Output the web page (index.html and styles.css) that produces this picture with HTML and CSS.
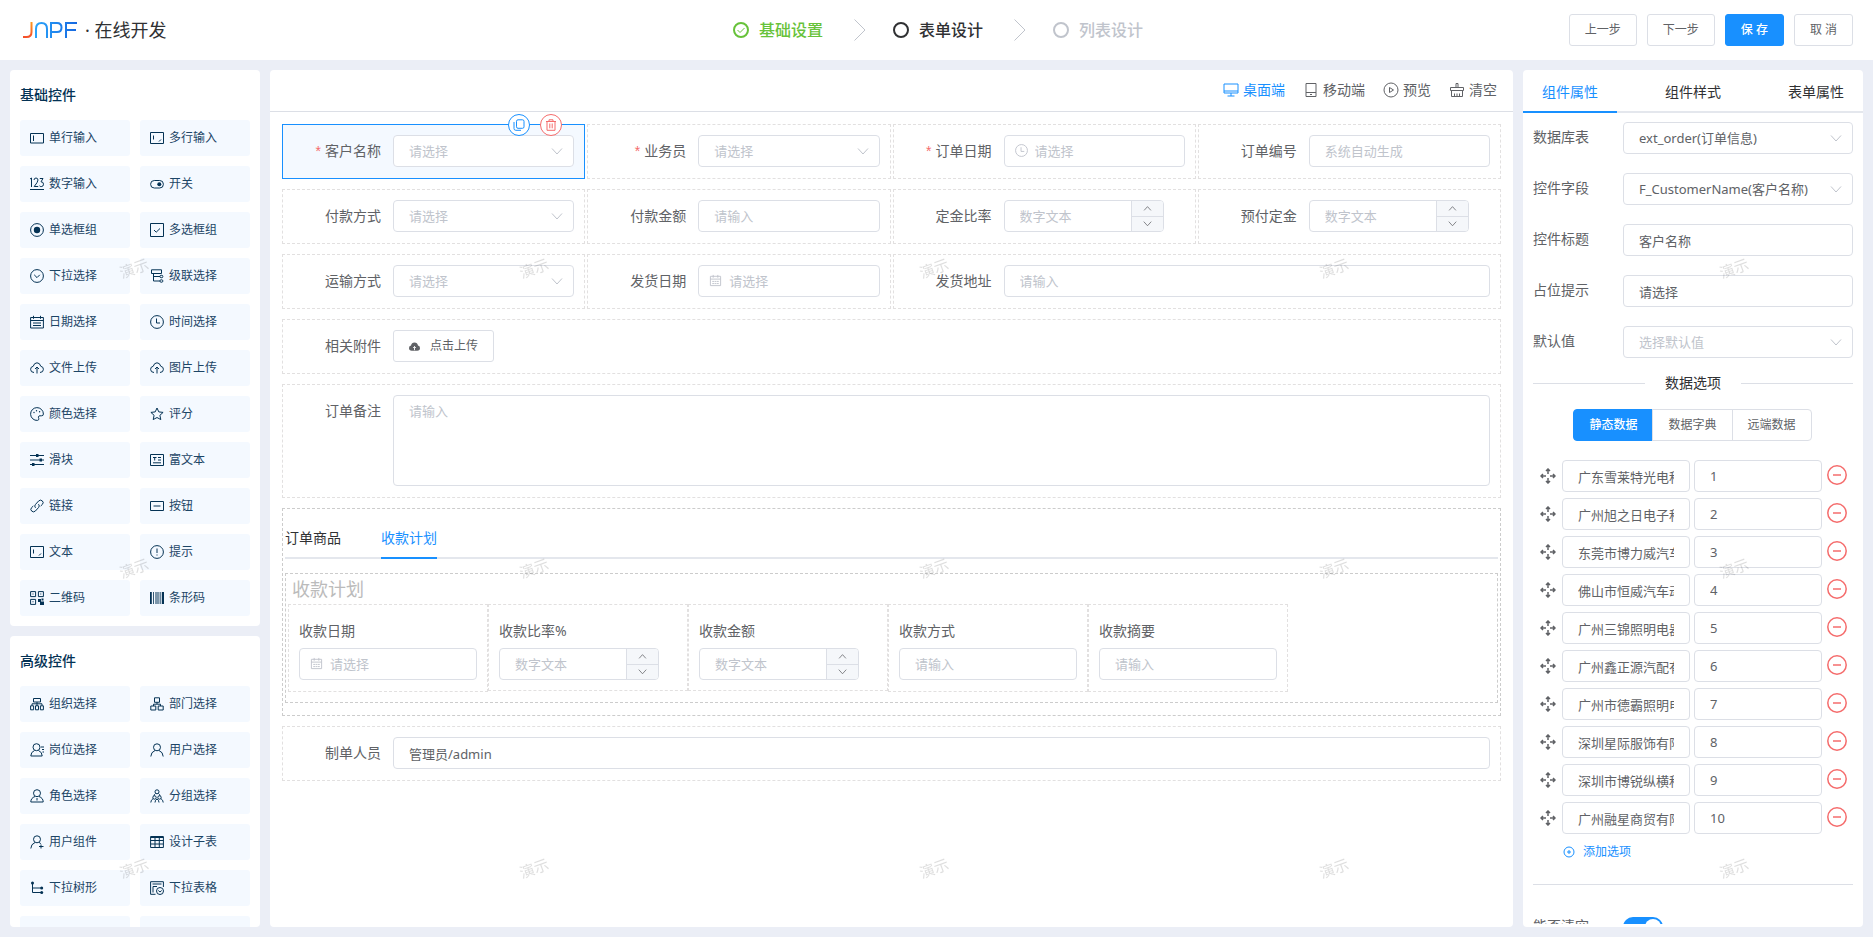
FILE: index.html
```html
<!DOCTYPE html>
<html lang="zh-CN">
<head>
<meta charset="utf-8">
<title>在线开发</title>
<link rel="stylesheet" href="styles.css">
</head>
<body>
<svg class="defs" aria-hidden="true">
  <defs>
    <symbol id="i-input" viewBox="0 0 14 14"><path d="M.5 2.500h13v9.500H.5zM3.500 4.500v5.500"/></symbol>
    <symbol id="i-textarea" viewBox="0 0 14 14"><path d="M.5 1.500h13v11H.5zM3.500 4.500v4M9 10.500l2-2"/></symbol>
    <symbol id="i-number" viewBox="0 0 14 14"><path d="M0 12.500h14M0 2l1.500-1v9M4 3q.2-2 2-2t2 2q0 2-3.800 6.500h4M9.800 1.500h3.200l-2 3.300q2.500 0 2.500 2.400T11.200 9.600q-1.200 0-1.700-.8"/></symbol>
    <symbol id="i-switch" viewBox="0 0 14 14"><rect x=".6" y="3.500" width="12.800" height="7.500" rx="3.700"/><circle class="solid" cx="9.300" cy="7.200" r="2"/></symbol>
    <symbol id="i-radio" viewBox="0 0 14 14"><circle cx="7" cy="7" r="6.400"/><circle class="solid" cx="7" cy="7" r="3.200"/></symbol>
    <symbol id="i-check" viewBox="0 0 14 14"><path d="M.5.5h13v13H.5zM4 7l2.200 2.200L10 5.500"/></symbol>
    <symbol id="i-select" viewBox="0 0 14 14"><circle cx="7" cy="7" r="6.400"/><path d="M4.200 5.800L7 8.600l2.800-2.800"/></symbol>
    <symbol id="i-cascade" viewBox="0 0 14 14"><path d="M1.500.8h10v3.700h-10zM3.500 4.500v7.500H10M3.500 7.500H10"/><rect x="10" y="6.300" width="2.800" height="2.400" rx="1"/><rect x="10" y="10.800" width="2.800" height="2.400" rx="1"/></symbol>
    <symbol id="i-date" viewBox="0 0 14 14"><path d="M.6 2.500h12.800v10.500H.6zM.6 5.500h12.800M3.500.8v3M10.500.8v3M3 8h8M3 10.500h8"/></symbol>
    <symbol id="i-time" viewBox="0 0 14 14"><circle cx="7" cy="7" r="6.400"/><path d="M6.500 3.500v4.500H10"/></symbol>
    <symbol id="i-upload" viewBox="0 0 14 14"><path d="M4 11.500Q.6 11.400.6 8.300q0-2.600 2.600-3Q4.200 1.800 7 1.800t3.800 3.500q2.600.4 2.600 3 0 3.100-3.400 3.200M7 12.500V6M5 8l2-2 2 2"/></symbol>
    <symbol id="i-color" viewBox="0 0 14 14"><path d="M7.500 13.400A6.400 6.400 0 1 1 13.400 7q0 2-2 1.800-3-.5-3 1.200 0 .8.400 1.600.3 1.500-1.300 1.800z"/><circle class="solid" cx="4" cy="5.500" r=".7"/><circle class="solid" cx="6.500" cy="3.700" r=".7"/><circle class="solid" cx="9.600" cy="4.700" r=".7"/></symbol>
    <symbol id="i-star" viewBox="0 0 14 14"><path d="M7 1l1.800 3.900 4.300.5-3.200 2.900.9 4.300L7 10.500l-3.800 2.100.9-4.300L.9 5.400l4.300-.5z"/></symbol>
    <symbol id="i-slider" viewBox="0 0 14 14"><path d="M0 2.500h14M0 7h14M0 11.500h14"/><path class="solid" d="M6 1h2.500v3H6zM9.500 5.500H12v3H9.500zM2 10h2.500v3H2z"/></symbol>
    <symbol id="i-rich" viewBox="0 0 14 14"><path d="M.5 1.500h13v11H.5zM3 4.500h3.500M4.700 4.500v3M8 4.500h3M8 7h3M3 9.800h8"/></symbol>
    <symbol id="i-link" viewBox="0 0 14 14"><path d="M5.500 8.800q-1.600-1.800 0-3.400l3.200-3.500q1.800-1.600 3.600 0t.1 3.500L10.700 7M8.500 5.200q1.600 1.800 0 3.400l-3.200 3.500q-1.800 1.600-3.600 0t-.1-3.500L3.300 7"/></symbol>
    <symbol id="i-button" viewBox="0 0 14 14"><path d="M.5 2.500h13v9H.5zM3.500 7h7"/></symbol>
    <symbol id="i-tip" viewBox="0 0 14 14"><circle cx="7" cy="7" r="6.400"/><path d="M7 3.500v4.500M7 9.500v1"/></symbol>
    <symbol id="i-qr" viewBox="0 0 14 14"><path d="M.6.6h5v5h-5zM8.400.6h5v5h-5zM.6 8.400h5v5h-5z"/><path class="solid" d="M2.500 2.500h1v1h-1zM10.300 2.500h1v1h-1zM2.500 10.300h1v1h-1zM8 8h3v3H8zM11.500 7.500h2v2h-2zM10 10.500h4V14h-4z"/></symbol>
    <symbol id="i-bar" viewBox="0 0 14 14"><path class="solid" d="M0 1h1.800v12H0zM3 1h.8v12H3zM5 1h.5v12H5zM6.500 1h1v12h-1zM8.500 1h.8v12h-.8zM10 1h.6v12H10zM11.800 1H14v12h-2.200z"/></symbol>
    <symbol id="i-org" viewBox="0 0 14 14"><path d="M3.500 1.500h7v3.500h-7zM7 5v4M2 8.500V6.800h10v1.700M.6 8.800h3v4h-3zM5.500 8.800h3v4h-3zM10.400 8.800h3v4h-3z"/></symbol>
    <symbol id="i-dept" viewBox="0 0 14 14"><path d="M4.500.8h5v4.500h-5zM7 5.300V7M3.500 9V7.200h7V9M.8 9h5v4h-5zM8.200 9h5v4h-5z"/></symbol>
    <symbol id="i-post" viewBox="0 0 14 14"><circle cx="6.500" cy="4.200" r="3.500"/><path d="M4.500 7.500Q.8 9 .8 13h11.400q0-4-3.700-5.500M11 4h3M12 6.500h2M12.500 9H14"/></symbol>
    <symbol id="i-user" viewBox="0 0 14 14"><circle cx="7" cy="4.300" r="3.500"/><path d="M.8 13.500Q1 9 5 7.500M13.200 13.500Q13 9 9 7.500"/></symbol>
    <symbol id="i-role" viewBox="0 0 14 14"><circle cx="7" cy="4.200" r="3.500"/><path d="M5 7.500Q.8 9 .8 13h12.400q0-4-4.200-5.500M7 9v2.500"/></symbol>
    <symbol id="i-group" viewBox="0 0 14 14"><circle cx="7" cy="2.800" r="2"/><circle cx="4.500" cy="8.500" r="1.700"/><circle cx="9.500" cy="8.500" r="1.700"/><path d="M5.500 4.500Q4 5.500 4 7M8.500 4.500Q10 5.500 10 7M3.200 9.500Q.8 11 .8 13.500M10.800 9.500q2.400 1.500 2.400 4M5 13.500q0-2.500 2-3.500 2 1 2 3.500"/></symbol>
    <symbol id="i-useradd" viewBox="0 0 14 14"><circle cx="7" cy="4.300" r="3.500"/><path d="M.8 13.500Q1 9 5 7.500M9 7.500q1 .3 1.800 1.200M11 9.500v4M9 11.500h4.500"/></symbol>
    <symbol id="i-table" viewBox="0 0 14 14"><path d="M.6 1.500h12.800v11H.6zM.6 2.500h12.800M.6 5.500h12.800M.6 9h12.800M5 1.500v11M9.300 1.500v11"/></symbol>
    <symbol id="i-tree" viewBox="0 0 14 14"><path d="M2.500 2v9.500H12M2.500 7H12"/><circle class="solid" cx="2.500" cy="2" r="1.500"/><circle class="solid" cx="11.700" cy="7" r="1.500"/><circle class="solid" cx="11.700" cy="11.500" r="1.500"/></symbol>
    <symbol id="i-seltable" viewBox="0 0 14 14"><path d="M5.500 13.300H.6V.7h12.800V6M2.500 3h9M3 5.500h4M3 5.500v6"/><circle cx="10" cy="10" r="3.500"/><path d="M8.300 9.500L10 11l1.700-1.500"/></symbol>
    <symbol id="i-down" viewBox="0 0 12 12"><path d="M1 3.500l5 5.500 5-5.500"/></symbol>
    <symbol id="i-up" viewBox="0 0 12 12"><path d="M1.500 8.500L6 3.500l4.500 5"/></symbol>
    <symbol id="i-cal" viewBox="0 0 14 14"><path d="M1.500 2.500h11v10h-11zM1.500 5.500h11M4.500 1v3M9.500 1v3M3.500 8h2M6 8h2M8.500 8h2M3.500 10.300h2M6 10.300h2M8.500 10.300h2"/></symbol>
    <symbol id="i-move" viewBox="0 0 16 16"><path d="M8 1v5M8 10v5M1 8h5M10 8h5M6 3l2-2 2 2M6 13l2 2 2-2M3 6L1 8l2 2M13 6l2 2-2 2"/></symbol>
    <symbol id="i-minus" viewBox="0 0 20 20"><circle cx="10" cy="10" r="9.200"/><path d="M6 10h8"/></symbol>
  </defs>
</svg>

<header class="topbar">
  <div class="brand">
    <svg class="logo" viewBox="0 0 54 16" role="img" aria-label="JNPF">
      <defs>
        <linearGradient id="gOrange" x1="0" y1="0" x2="0" y2="1"><stop offset="0" stop-color="#ff9a1f"/><stop offset="1" stop-color="#f4502a"/></linearGradient>
        <linearGradient id="gBlue" gradientUnits="userSpaceOnUse" x1="12" y1="0" x2="54" y2="0"><stop offset="0" stop-color="#2aa5fb"/><stop offset="1" stop-color="#1668e0"/></linearGradient>
      </defs>
      <path stroke="url(#gOrange)" d="M8.500 0v10q0 5-5 5H0"/>
      <path stroke="url(#gBlue)" d="M13 16V7q0-6 5.500-6T24 7v9M28 16V1h6q4.500 0 4.500 4.500T34 10h-6M54 1H43v15M43 8h10"/>
    </svg>
    <span class="brand-text">· 在线开发</span>
  </div>
  <ol class="steps">
    <li class="step done"><svg viewBox="0 0 16 16"><circle cx="8" cy="8" r="7"/><path class="fine" d="M4.500 8l2.500 2.500L11.500 6"/></svg>基础设置</li>
    <li class="arrow" aria-hidden="true"><svg viewBox="0 0 12 22"><path d="M.5.5L11 11 .5 21.500"/></svg></li>
    <li class="step current"><svg viewBox="0 0 16 16"><circle cx="8" cy="8" r="7"/></svg>表单设计</li>
    <li class="arrow" aria-hidden="true"><svg viewBox="0 0 12 22"><path d="M.5.5L11 11 .5 21.500"/></svg></li>
    <li class="step"><svg viewBox="0 0 16 16"><circle cx="8" cy="8" r="7"/></svg>列表设计</li>
  </ol>
  <div class="actions">
    <button class="btn">上一步</button>
    <button class="btn">下一步</button>
    <button class="btn primary">保 存</button>
    <button class="btn">取 消</button>
  </div>
</header>

<main class="workspace">
  <aside class="left">
    <section class="panel palette">
      <h2>基础控件</h2>
      <div class="tiles">
        <button class="tile"><svg class="ico"><use href="#i-input"/></svg>单行输入</button>
        <button class="tile"><svg class="ico"><use href="#i-textarea"/></svg>多行输入</button>
        <button class="tile"><svg class="ico"><use href="#i-number"/></svg>数字输入</button>
        <button class="tile"><svg class="ico"><use href="#i-switch"/></svg>开关</button>
        <button class="tile"><svg class="ico"><use href="#i-radio"/></svg>单选框组</button>
        <button class="tile"><svg class="ico"><use href="#i-check"/></svg>多选框组</button>
        <button class="tile"><svg class="ico"><use href="#i-select"/></svg>下拉选择</button>
        <button class="tile"><svg class="ico"><use href="#i-cascade"/></svg>级联选择</button>
        <button class="tile"><svg class="ico"><use href="#i-date"/></svg>日期选择</button>
        <button class="tile"><svg class="ico"><use href="#i-time"/></svg>时间选择</button>
        <button class="tile"><svg class="ico"><use href="#i-upload"/></svg>文件上传</button>
        <button class="tile"><svg class="ico"><use href="#i-upload"/></svg>图片上传</button>
        <button class="tile"><svg class="ico"><use href="#i-color"/></svg>颜色选择</button>
        <button class="tile"><svg class="ico"><use href="#i-star"/></svg>评分</button>
        <button class="tile"><svg class="ico"><use href="#i-slider"/></svg>滑块</button>
        <button class="tile"><svg class="ico"><use href="#i-rich"/></svg>富文本</button>
        <button class="tile"><svg class="ico"><use href="#i-link"/></svg>链接</button>
        <button class="tile"><svg class="ico"><use href="#i-button"/></svg>按钮</button>
        <button class="tile"><svg class="ico"><use href="#i-textarea"/></svg>文本</button>
        <button class="tile"><svg class="ico"><use href="#i-tip"/></svg>提示</button>
        <button class="tile"><svg class="ico"><use href="#i-qr"/></svg>二维码</button>
        <button class="tile"><svg class="ico"><use href="#i-bar"/></svg>条形码</button>
      </div>
    </section>
    <section class="panel palette grow">
      <h2>高级控件</h2>
      <div class="tiles">
        <button class="tile"><svg class="ico"><use href="#i-org"/></svg>组织选择</button>
        <button class="tile"><svg class="ico"><use href="#i-dept"/></svg>部门选择</button>
        <button class="tile"><svg class="ico"><use href="#i-post"/></svg>岗位选择</button>
        <button class="tile"><svg class="ico"><use href="#i-user"/></svg>用户选择</button>
        <button class="tile"><svg class="ico"><use href="#i-role"/></svg>角色选择</button>
        <button class="tile"><svg class="ico"><use href="#i-group"/></svg>分组选择</button>
        <button class="tile"><svg class="ico"><use href="#i-useradd"/></svg>用户组件</button>
        <button class="tile"><svg class="ico"><use href="#i-table"/></svg>设计子表</button>
        <button class="tile"><svg class="ico"><use href="#i-tree"/></svg>下拉树形</button>
        <button class="tile"><svg class="ico"><use href="#i-seltable"/></svg>下拉表格</button>
        <button class="tile" aria-label="更多"></button>
        <button class="tile" aria-label="更多"></button>
      </div>
    </section>
  </aside>

  <section class="panel canvas">
    <div class="toolbar">
      <button class="tool active"><svg viewBox="0 0 16 16"><path d="M1 2h14v9H1zM1 9h14M8 11v3M4.500 14h7"/></svg>桌面端</button>
      <button class="tool"><svg viewBox="0 0 16 16"><path d="M3 1.500h10v13H3zM3 10.500h10M7 12.500h2"/></svg>移动端</button>
      <button class="tool"><svg viewBox="0 0 16 16"><circle cx="8" cy="8" r="7"/><path d="M6.500 5.500v5L10.500 8z"/></svg>预览</button>
      <button class="tool"><svg viewBox="0 0 16 16"><path d="M7 1.500h2v4H7zM1.500 5.500h13v3h-13zM2.500 8.500v6h11v-6M5.500 11.500v3M8 11.500v3M10.500 11.500v3"/></svg>清空</button>
    </div>

    <form class="form">
      <div class="cell selected">
        <label class="lbl req" for="f1">客户名称</label>
        <div class="field"><select id="f1" class="control empty"><option>请选择</option></select><svg class="caret"><use href="#i-down"/></svg></div>
        <div class="badges">
          <button type="button" class="badge copy" aria-label="复制"><svg viewBox="0 0 12 12"><rect x="3.500" y=".8" width="7.500" height="8.500" rx="1.500"/><path d="M1 3v6.500q0 1.800 1.800 1.800H8"/></svg></button>
          <button type="button" class="badge del" aria-label="删除"><svg viewBox="0 0 12 12"><path d="M1 2.500h10M4 2.500V.8h4v1.700M2 2.500v8.800h8V2.500M4.800 4.500v4.800M7.200 4.500v4.800"/></svg></button>
        </div>
      </div>
      <div class="cell">
        <label class="lbl req" for="f2">业务员</label>
        <div class="field"><select id="f2" class="control empty"><option>请选择</option></select><svg class="caret"><use href="#i-down"/></svg></div>
      </div>
      <div class="cell">
        <label class="lbl req" for="f3">订单日期</label>
        <div class="field"><svg class="prefix"><use href="#i-time"/></svg><input id="f3" class="control prefixed" placeholder="请选择"></div>
      </div>
      <div class="cell">
        <label class="lbl" for="f4">订单编号</label>
        <div class="field"><input id="f4" class="control" placeholder="系统自动生成"></div>
      </div>

      <div class="cell">
        <label class="lbl" for="f5">付款方式</label>
        <div class="field"><select id="f5" class="control empty"><option>请选择</option></select><svg class="caret"><use href="#i-down"/></svg></div>
      </div>
      <div class="cell">
        <label class="lbl" for="f6">付款金额</label>
        <div class="field"><input id="f6" class="control" placeholder="请输入"></div>
      </div>
      <div class="cell">
        <label class="lbl" for="f7">定金比率</label>
        <div class="number"><input id="f7" placeholder="数字文本"><span class="spin"><button type="button" aria-label="增加"><svg><use href="#i-up"/></svg></button><button type="button" aria-label="减少"><svg><use href="#i-down"/></svg></button></span></div>
      </div>
      <div class="cell">
        <label class="lbl" for="f8">预付定金</label>
        <div class="number"><input id="f8" placeholder="数字文本"><span class="spin"><button type="button" aria-label="增加"><svg><use href="#i-up"/></svg></button><button type="button" aria-label="减少"><svg><use href="#i-down"/></svg></button></span></div>
      </div>

      <div class="cell">
        <label class="lbl" for="f9">运输方式</label>
        <div class="field"><select id="f9" class="control empty"><option>请选择</option></select><svg class="caret"><use href="#i-down"/></svg></div>
      </div>
      <div class="cell">
        <label class="lbl" for="f10">发货日期</label>
        <div class="field"><svg class="prefix"><use href="#i-cal"/></svg><input id="f10" class="control prefixed" placeholder="请选择"></div>
      </div>
      <div class="cell half">
        <label class="lbl" for="f11">发货地址</label>
        <div class="field"><input id="f11" class="control" placeholder="请输入"></div>
      </div>

      <div class="cell full">
        <span class="lbl">相关附件</span>
        <button type="button" class="btn upload"><svg viewBox="0 0 12 12"><path fill="#606266" d="M3 10.500Q0 10.400 0 7.600 0 5.400 2.200 5 2.800 1.500 6 1.500T9.800 5Q12 5.400 12 7.600q0 2.800-3 2.900z"/><path stroke="#fff" d="M6 10V6M4.500 7.500L6 6l1.500 1.500"/></svg>点击上传</button>
      </div>

      <div class="cell full">
        <label class="lbl" for="f12">订单备注</label>
        <div class="field"><textarea id="f12" class="control area" placeholder="请输入"></textarea></div>
      </div>

      <div class="tabbox full">
        <div class="tabs" role="tablist">
          <button type="button" class="tab" role="tab">订单商品</button>
          <button type="button" class="tab on" role="tab">收款计划</button>
        </div>
        <div class="subtable">
          <h3>收款计划</h3>
          <div class="columns">
            <div class="col">
              <label for="s1">收款日期</label>
              <div class="field"><svg class="prefix"><use href="#i-cal"/></svg><input id="s1" class="control prefixed" placeholder="请选择"></div>
            </div>
            <div class="col short">
              <label for="s2">收款比率%</label>
              <div class="number"><input id="s2" placeholder="数字文本"><span class="spin"><button type="button" aria-label="增加"><svg><use href="#i-up"/></svg></button><button type="button" aria-label="减少"><svg><use href="#i-down"/></svg></button></span></div>
            </div>
            <div class="col short">
              <label for="s3">收款金额</label>
              <div class="number"><input id="s3" placeholder="数字文本"><span class="spin"><button type="button" aria-label="增加"><svg><use href="#i-up"/></svg></button><button type="button" aria-label="减少"><svg><use href="#i-down"/></svg></button></span></div>
            </div>
            <div class="col">
              <label for="s4">收款方式</label>
              <div class="field"><input id="s4" class="control" placeholder="请输入"></div>
            </div>
            <div class="col">
              <label for="s5">收款摘要</label>
              <div class="field"><input id="s5" class="control" placeholder="请输入"></div>
            </div>
          </div>
        </div>
      </div>

      <div class="cell full">
        <label class="lbl" for="f13">制单人员</label>
        <div class="field"><input id="f13" class="control" value="管理员/admin"></div>
      </div>
    </form>
  </section>

  <aside class="panel props">
    <div class="ptabs" role="tablist">
      <button class="ptab on" role="tab">组件属性</button>
      <button class="ptab" role="tab">组件样式</button>
      <button class="ptab" role="tab">表单属性</button>
    </div>
    <div class="pbody">
      <div class="prow"><label for="p1">数据库表</label><div class="field"><select id="p1" class="control"><option>ext_order(订单信息)</option></select><svg class="caret"><use href="#i-down"/></svg></div></div>
      <div class="prow"><label for="p2">控件字段</label><div class="field"><select id="p2" class="control"><option>F_CustomerName(客户名称)</option></select><svg class="caret"><use href="#i-down"/></svg></div></div>
      <div class="prow"><label for="p3">控件标题</label><div class="field"><input id="p3" class="control" value="客户名称"></div></div>
      <div class="prow"><label for="p4">占位提示</label><div class="field"><input id="p4" class="control" value="请选择"></div></div>
      <div class="prow"><label for="p5">默认值</label><div class="field"><select id="p5" class="control empty"><option>选择默认值</option></select><svg class="caret"><use href="#i-down"/></svg></div></div>

      <div class="divider"><span>数据选项</span></div>

      <div class="group">
        <button class="on">静态数据</button><button>数据字典</button><button>远端数据</button>
      </div>

      <div class="options">
        <div class="opt"><svg class="move"><use href="#i-move"/></svg><input class="control" aria-label="选项名" value="广东雪莱特光电科技"><input class="control" aria-label="选项值" value="1"><button aria-label="删除"><svg><use href="#i-minus"/></svg></button></div>
        <div class="opt"><svg class="move"><use href="#i-move"/></svg><input class="control" aria-label="选项名" value="广州旭之日电子科技"><input class="control" aria-label="选项值" value="2"><button aria-label="删除"><svg><use href="#i-minus"/></svg></button></div>
        <div class="opt"><svg class="move"><use href="#i-move"/></svg><input class="control" aria-label="选项名" value="东莞市博力威汽车"><input class="control" aria-label="选项值" value="3"><button aria-label="删除"><svg><use href="#i-minus"/></svg></button></div>
        <div class="opt"><svg class="move"><use href="#i-move"/></svg><input class="control" aria-label="选项名" value="佛山市恒威汽车动力"><input class="control" aria-label="选项值" value="4"><button aria-label="删除"><svg><use href="#i-minus"/></svg></button></div>
        <div class="opt"><svg class="move"><use href="#i-move"/></svg><input class="control" aria-label="选项名" value="广州三锦照明电器"><input class="control" aria-label="选项值" value="5"><button aria-label="删除"><svg><use href="#i-minus"/></svg></button></div>
        <div class="opt"><svg class="move"><use href="#i-move"/></svg><input class="control" aria-label="选项名" value="广州鑫正源汽配有限"><input class="control" aria-label="选项值" value="6"><button aria-label="删除"><svg><use href="#i-minus"/></svg></button></div>
        <div class="opt"><svg class="move"><use href="#i-move"/></svg><input class="control" aria-label="选项名" value="广州市德霸照明电器"><input class="control" aria-label="选项值" value="7"><button aria-label="删除"><svg><use href="#i-minus"/></svg></button></div>
        <div class="opt"><svg class="move"><use href="#i-move"/></svg><input class="control" aria-label="选项名" value="深圳星际服饰有限"><input class="control" aria-label="选项值" value="8"><button aria-label="删除"><svg><use href="#i-minus"/></svg></button></div>
        <div class="opt"><svg class="move"><use href="#i-move"/></svg><input class="control" aria-label="选项名" value="深圳市博锐纵横科技"><input class="control" aria-label="选项值" value="9"><button aria-label="删除"><svg><use href="#i-minus"/></svg></button></div>
        <div class="opt"><svg class="move"><use href="#i-move"/></svg><input class="control" aria-label="选项名" value="广州融星商贸有限"><input class="control" aria-label="选项值" value="10"><button aria-label="删除"><svg><use href="#i-minus"/></svg></button></div>
      </div>
      <button class="add"><svg viewBox="0 0 12 12"><circle cx="6" cy="6" r="5"/><path d="M6 4v4M4 6h4"/></svg>添加选项</button>
      <hr class="rule">
      <div class="prow"><label for="p6">能否清空</label><input type="checkbox" id="p6" class="switch" checked></div>
    </div>
  </aside>
</main>

<svg class="watermark" aria-hidden="true">
  <defs><pattern id="wm" width="400" height="300" patternUnits="userSpaceOnUse"><text x="134" y="274" text-anchor="middle" transform="rotate(-20 134 268)">演示</text></pattern></defs>
  <rect width="100%" height="100%" fill="url(#wm)"/>
</svg>
</body>
</html>
```
FILE: styles.css
```css
* { box-sizing: border-box; }

body {
  margin: 0;
  height: 100vh;
  display: flex;
  flex-direction: column;
  overflow: hidden;
  background: #ebeef6;
  color: #606266;
  font: 14px/20px "Noto Sans", "Noto Sans CJK SC", sans-serif;
}

button, input, select, textarea { font: inherit; color: inherit; margin: 0; }
button { background: none; border: 0; padding: 0; cursor: pointer; }
h2, h3, ol { margin: 0; padding: 0; font-weight: 400; list-style: none; }
svg { fill: none; stroke: currentColor; flex: none; display: block; }
.defs { position: absolute; width: 0; height: 0; }
.solid { fill: currentColor; stroke: none; }

/* header */
.topbar {
  flex: none;
  height: 60px;
  padding: 0 20px;
  display: flex;
  align-items: center;
  background: #fff;
}
.brand { flex: 1; display: flex; align-items: center; gap: 8px; padding-left: 3px; }
.logo { width: 54px; height: 16px; stroke-width: 2; }
.brand-text { font-size: 18px; color: #303133; line-height: 28px; }
.steps { display: flex; align-items: center; font-size: 16px; }
.step { display: flex; align-items: center; gap: 10px; color: #c0c4cc; font-weight: 500; }
.step svg { width: 16px; height: 16px; stroke-width: 2; }
.step .fine { stroke-width: 1; }
.step.done { color: #67c23a; }
.step.current { color: #303133; }
.arrow { width: 70px; padding-left: 31px; color: #c0c4cc; }
.arrow svg { width: 12px; height: 22px; }
.actions { flex: 1; display: flex; justify-content: flex-end; gap: 10px; }
.btn {
  height: 32px;
  padding: 0 15px;
  border: 1px solid #dcdfe6;
  border-radius: 3px;
  background: #fff;
  font-size: 12px;
}
.btn.primary { background: #1890ff; border-color: #1890ff; color: #fff; font-weight: 500; }

/* layout */
.workspace { flex: 1; min-height: 0; padding: 10px; display: flex; gap: 10px; }
.panel { background: #fff; border-radius: 4px; overflow: hidden; }
.left { width: 250px; flex: none; display: flex; flex-direction: column; gap: 10px; }

/* palette */
.palette { flex: none; padding: 10px; }
.palette.grow { flex: 1; min-height: 0; }
.palette h2 { height: 40px; line-height: 30px; font-size: 14px; font-weight: 500; color: #043254; }
.tiles { display: grid; grid-template-columns: 1fr 1fr; gap: 10px; }
.tile {
  height: 36px;
  padding: 0 10px;
  display: flex;
  align-items: center;
  gap: 5px;
  border-radius: 3px;
  background: #f4f9ff;
  color: #1c4566;
  font-size: 12px;
}
.ico { width: 14px; height: 14px; color: #043254; }

/* canvas */
.canvas { flex: 1; min-width: 0; }
.toolbar {
  height: 42px;
  padding: 0 16px 2px;
  display: flex;
  align-items: center;
  justify-content: flex-end;
  gap: 18px;
  border-bottom: 1px solid #dcdfe6;
}
.tool { display: flex; align-items: center; gap: 4px; }
.tool svg { width: 16px; height: 16px; }
.tool.active { color: #1890ff; }
.form { padding: 12px; display: grid; grid-template-columns: repeat(4, minmax(0, 1fr)); gap: 10px 2px; }
.cell { position: relative; display: flex; align-items: flex-start; padding: 10px 10px 11px; border: 1px dashed #e2e0e0; }
.cell.selected { border: 1px solid #1890ff; background: #f4f9ff; }
.half { grid-column: span 2; }
.full { grid-column: 1 / -1; }
.lbl { width: 100px; flex: none; padding-right: 12px; line-height: 32px; text-align: right; }
.req::before { content: "*"; margin-right: 4px; color: #f56c6c; font-family: "Liberation Sans", sans-serif; }

.field { position: relative; flex: 1; min-width: 0; display: flex; }
.control {
  width: 100%;
  min-width: 0;
  height: 32px;
  padding: 0 15px;
  border: 1px solid #dcdfe6;
  border-radius: 4px;
  background: #fff;
  font-size: 13px;
  appearance: none;
  outline: 0;
}
.empty { color: #c0c4cc; }
::placeholder { color: #c0c4cc; opacity: 1; }
.prefixed { padding-left: 30px; }
.area { height: 91px; padding: 5px 15px; resize: none; display: block; }
.caret { position: absolute; right: 11px; top: 10px; width: 12px; height: 12px; color: #c0c4cc; pointer-events: none; }
.prefix { position: absolute; left: 11px; top: 9px; width: 13px; height: 13px; color: #c0c4cc; }

.number { width: 160px; height: 32px; display: flex; border: 1px solid #dcdfe6; border-radius: 4px; overflow: hidden; background: #fff; }
.number input { flex: 1; min-width: 0; padding: 0 15px; border: 0; background: none; font-size: 13px; outline: 0; }
.spin { width: 32px; display: flex; flex-direction: column; border-left: 1px solid #dcdfe6; background: #f5f7fa; }
.spin button { flex: 1; display: grid; place-items: center; }
.spin button + button { border-top: 1px solid #dcdfe6; }
.spin svg { width: 9px; height: 9px; }

.badges { position: absolute; right: 22px; top: -11px; z-index: 1; display: flex; gap: 10px; }
.badge { width: 22px; height: 22px; display: grid; place-items: center; border: 1px solid; border-radius: 50%; background: #fff; }
.badge svg { width: 12px; height: 12px; }
.copy { color: #1890ff; }
.del { color: #f56c6c; }

.upload { display: flex; align-items: center; gap: 10px; }
.upload svg { width: 11px; height: 11px; stroke: none; }

.tabbox { padding: 10px 2px 12px; border: 1px dashed #ccc; }
.tabs { display: flex; gap: 40px; height: 40px; border-bottom: 2px solid #e4e7ed; color: #303133; }
.tab { height: 40px; border-bottom: 2px solid transparent; }
.tab.on { color: #1890ff; border-color: #1890ff; }
.subtable { margin-top: 14px; padding: 0 2px 10px; border: 1px dashed #ccc; }
.subtable h3 { height: 30px; padding-left: 4px; font-size: 18px; line-height: 30px; color: #bbb; }
.columns { display: flex; align-items: flex-start; }
.col { width: 200px; padding: 10px 10px 11px; border: 1px dashed #e2e0e0; }
.col.short { padding-bottom: 10px; }
.col label { display: block; line-height: 31px; margin-bottom: 2px; }

/* properties */
.props { width: 340px; flex: none; display: flex; flex-direction: column; padding-bottom: 3px; }
.ptabs { flex: none; height: 43px; display: flex; justify-content: space-between; border-bottom: 2px solid #e4e7ed; color: #303133; }
.ptab { height: 43px; padding: 2px 19px 0; border-bottom: 2px solid transparent; }
.ptab.on { color: #1890ff; border-color: #1890ff; }
.pbody { flex: 1; min-height: 0; padding: 9px 10px 0; overflow: hidden; }
.prow { display: flex; margin-bottom: 19px; }
.prow label { width: 90px; flex: none; line-height: 30px; }
.divider { display: flex; align-items: center; gap: 20px; height: 30px; margin-top: -9px; color: #303133; }
.divider::before, .divider::after { content: ""; flex: 1; height: 1px; background: #dcdfe6; }
.group { display: flex; justify-content: center; margin: 11px 0 19px; }
.group button { height: 32px; padding: 0 15px; border: 1px solid #dcdfe6; margin-left: -1px; font-size: 12px; }
.group button:first-child { border-radius: 4px 0 0 4px; }
.group button:last-child { border-radius: 0 4px 4px 0; }
.group .on { background: #1890ff; border-color: #1890ff; color: #fff; font-weight: 500; }
.options { display: flex; flex-direction: column; gap: 6px; }
.opt { display: flex; align-items: center; gap: 4px; padding: 0 6px 0 7px; }
.opt .control { flex: 1; width: 0; }
.move { width: 16px; height: 16px; margin-right: 2px; stroke-width: 1.5; }
.opt button { margin: 0 0 2px 1px; color: #f56c6c; }
.opt button svg { width: 20px; height: 20px; stroke-width: 1.5; }
.add { display: flex; align-items: center; gap: 8px; margin: 8px 0 0 30px; color: #1890ff; font-size: 12px; line-height: 20px; }
.add svg { width: 12px; height: 12px; }
.rule { height: 1px; margin: 22px 0 26px; border: 0; background: #dcdfe6; }
.switch { position: relative; width: 40px; height: 20px; margin: 6px 0; border-radius: 10px; background: #1890ff; appearance: none; }
.switch::after { content: ""; position: absolute; right: 2px; top: 2px; width: 16px; height: 16px; border-radius: 50%; background: #fff; }

.watermark { position: fixed; inset: 0; width: 100%; height: 100%; z-index: 10; pointer-events: none; }
.watermark text { fill: rgba(0, 0, 0, 0.13); stroke: none; font-size: 15px; }
.watermark rect { stroke: none; }
```
